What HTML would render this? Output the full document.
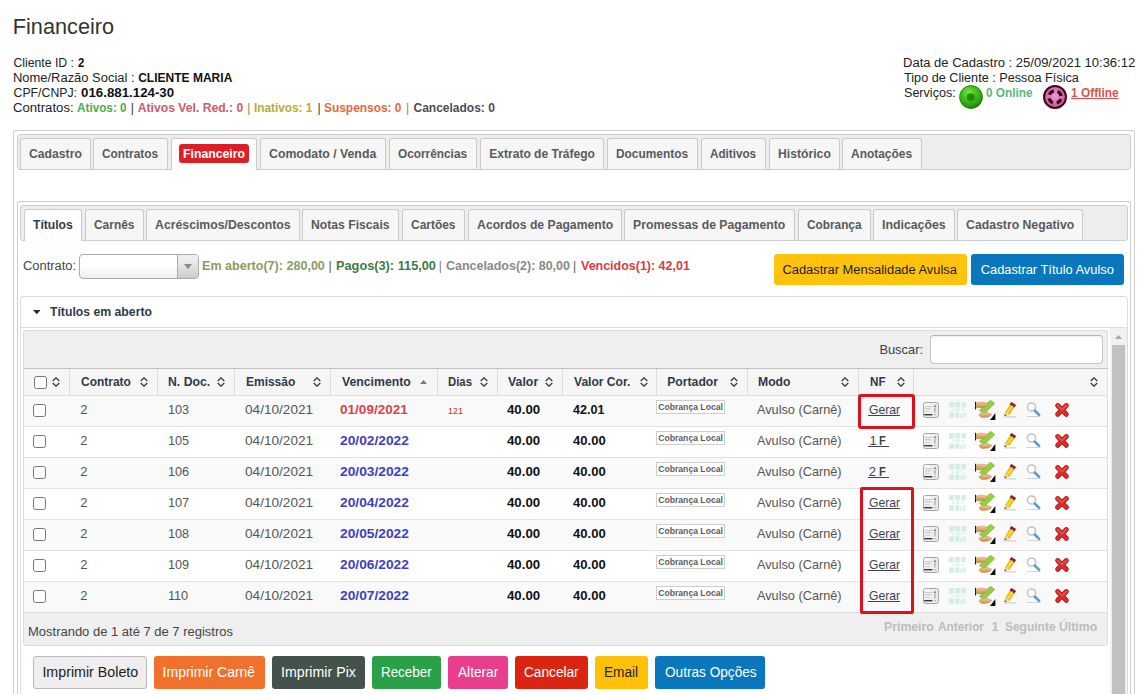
<!DOCTYPE html>
<html lang="pt-br"><head><meta charset="utf-8"><title>Financeiro</title>
<style>
html,body{margin:0;padding:0;background:#fff;}
html{width:1146px;height:694px;overflow:hidden;}
body{width:1146px;height:694px;overflow:hidden;position:relative;font-family:"Liberation Sans",sans-serif;}
body>div,body>svg,body>span{position:absolute;box-sizing:border-box;}
span.t{white-space:pre;display:block;transform-origin:0 0;line-height:20px;}

</style></head>
<body>
<svg style="left:959px;top:85px" width="24" height="24" viewBox="0 0 24 24"><defs>
<radialGradient id="gb" cx="42%" cy="32%" r="68%"><stop offset="0" stop-color="#7ee24e"/><stop offset=".45" stop-color="#45c01e"/><stop offset=".8" stop-color="#2ca010"/><stop offset="1" stop-color="#1a7a08"/></radialGradient>
<radialGradient id="gc" cx="50%" cy="50%" r="50%"><stop offset="0" stop-color="#1b7d0c"/><stop offset=".7" stop-color="#239212"/><stop offset="1" stop-color="#34ad1a"/></radialGradient></defs>
<circle cx="12" cy="12" r="11.7" fill="url(#gb)"/><circle cx="12" cy="12" r="11.3" fill="none" stroke="#1f820c" stroke-width=".9" opacity=".8"/><circle cx="11.9" cy="12.4" r="4.5" fill="url(#gc)"/></svg>
<svg style="left:1043px;top:85px" width="24" height="24" viewBox="0 0 24 24"><defs>
<radialGradient id="pb" cx="50%" cy="45%" r="55%"><stop offset="0" stop-color="#ea9ad6"/><stop offset=".55" stop-color="#e070b0"/><stop offset="1" stop-color="#cf4b86"/></radialGradient></defs>
<circle cx="12" cy="12" r="11" fill="url(#pb)" stroke="#3b0a20" stroke-width="2"/>
<circle cx="12" cy="12" r="6.1" fill="none" stroke="#26081a" stroke-width="3.1" stroke-dasharray="5.6 3.98" stroke-dashoffset="-1.99"/></svg>
<div style="left:13px;top:130px;width:1122px;height:564px;border:1px solid #cdcdcd;border-bottom:0;border-radius:3px 3px 0 0;background:#fff;"></div>
<div style="left:17px;top:134px;width:1114px;height:36px;border:1px solid #cdcdcd;border-radius:3px;background:#ededed;"></div>
<div style="left:20px;top:138px;width:71px;height:31px;border:1px solid #cacaca;border-bottom:0;border-radius:3px 3px 0 0;background:#f6f6f6;"></div>
<div style="left:93px;top:138px;width:75px;height:31px;border:1px solid #cacaca;border-bottom:0;border-radius:3px 3px 0 0;background:#f6f6f6;"></div>
<div style="left:171px;top:138px;width:86px;height:32px;border:1px solid #cacaca;border-bottom:0;border-radius:3px 3px 0 0;background:#fff;"></div>
<div style="left:179px;top:144px;width:70px;height:19px;background:#dc1f26;border-radius:3px;"></div>
<div style="left:260px;top:138px;width:126px;height:31px;border:1px solid #cacaca;border-bottom:0;border-radius:3px 3px 0 0;background:#f6f6f6;"></div>
<div style="left:389px;top:138px;width:88px;height:31px;border:1px solid #cacaca;border-bottom:0;border-radius:3px 3px 0 0;background:#f6f6f6;"></div>
<div style="left:480px;top:138px;width:124px;height:31px;border:1px solid #cacaca;border-bottom:0;border-radius:3px 3px 0 0;background:#f6f6f6;"></div>
<div style="left:607px;top:138px;width:91px;height:31px;border:1px solid #cacaca;border-bottom:0;border-radius:3px 3px 0 0;background:#f6f6f6;"></div>
<div style="left:701px;top:138px;width:65px;height:31px;border:1px solid #cacaca;border-bottom:0;border-radius:3px 3px 0 0;background:#f6f6f6;"></div>
<div style="left:769px;top:138px;width:71px;height:31px;border:1px solid #cacaca;border-bottom:0;border-radius:3px 3px 0 0;background:#f6f6f6;"></div>
<div style="left:842px;top:138px;width:80px;height:31px;border:1px solid #cacaca;border-bottom:0;border-radius:3px 3px 0 0;background:#f6f6f6;"></div>
<div style="left:17px;top:201px;width:1114px;height:493px;border:1px solid #cdcdcd;border-bottom:0;border-radius:3px 3px 0 0;background:#fff;"></div>
<div style="left:20px;top:205px;width:1108px;height:36px;border:1px solid #cdcdcd;border-radius:3px;background:#ededed;"></div>
<div style="left:24px;top:209px;width:58px;height:32px;border:1px solid #cacaca;border-bottom:0;border-radius:3px 3px 0 0;background:#fff;"></div>
<div style="left:85px;top:209px;width:59px;height:31px;border:1px solid #cacaca;border-bottom:0;border-radius:3px 3px 0 0;background:#f6f6f6;"></div>
<div style="left:146px;top:209px;width:154px;height:31px;border:1px solid #cacaca;border-bottom:0;border-radius:3px 3px 0 0;background:#f6f6f6;"></div>
<div style="left:302px;top:209px;width:97px;height:31px;border:1px solid #cacaca;border-bottom:0;border-radius:3px 3px 0 0;background:#f6f6f6;"></div>
<div style="left:402px;top:209px;width:63px;height:31px;border:1px solid #cacaca;border-bottom:0;border-radius:3px 3px 0 0;background:#f6f6f6;"></div>
<div style="left:468px;top:209px;width:154px;height:31px;border:1px solid #cacaca;border-bottom:0;border-radius:3px 3px 0 0;background:#f6f6f6;"></div>
<div style="left:624px;top:209px;width:171px;height:31px;border:1px solid #cacaca;border-bottom:0;border-radius:3px 3px 0 0;background:#f6f6f6;"></div>
<div style="left:798px;top:209px;width:73px;height:31px;border:1px solid #cacaca;border-bottom:0;border-radius:3px 3px 0 0;background:#f6f6f6;"></div>
<div style="left:873px;top:209px;width:82px;height:31px;border:1px solid #cacaca;border-bottom:0;border-radius:3px 3px 0 0;background:#f6f6f6;"></div>
<div style="left:957px;top:209px;width:126px;height:31px;border:1px solid #cacaca;border-bottom:0;border-radius:3px 3px 0 0;background:#f6f6f6;"></div>
<div style="left:79px;top:254px;width:120px;height:25px;border:1px solid #aaa;border-radius:4px;background:linear-gradient(#fff 50%,#eee 100%);"></div>
<div style="left:177px;top:255px;width:21px;height:23px;border-left:1px solid #aaa;border-radius:0 3px 3px 0;background:linear-gradient(#eee 20%,#ccc 100%);"></div>
<svg style="left:184px;top:264px" width="8" height="5" viewBox="0 0 8 5"><path d="M0 0H8L4 5Z" fill="#888"/></svg>
<div style="left:774px;top:254px;width:193px;height:31px;background:#ffc20e;border-radius:3px;"></div>
<div style="left:971px;top:254px;width:153px;height:31px;background:#0a77bd;border-radius:3px;"></div>
<div style="left:20px;top:296px;width:1108px;height:32px;border:1px solid #ddd;border-radius:3px 3px 0 0;background:#fff;"></div>
<svg style="left:32.7px;top:309.8px" width="7.6" height="4.3" viewBox="0 0 7.6 4.3"><path d="M0 0H7.6L3.8 4.3Z" fill="#2e2e2e"/></svg>
<div style="left:20px;top:327px;width:1108px;height:367px;border:1px solid #ddd;border-bottom:0;background:#fff;"></div>
<div style="left:1110px;top:328px;width:17px;height:366px;background:#f1f1f1;"></div>
<svg style="left:1115px;top:335px" width="7" height="4" viewBox="0 0 7 4"><path d="M0 4L3.5 0L7 4Z" fill="#a6a6a6"/></svg>
<div style="left:1112px;top:345px;width:13px;height:349px;background:#c1c1c1;"></div>
<div style="left:23px;top:330px;width:1085px;height:39px;border:1px solid #ddd;border-bottom:0;border-radius:3px 3px 0 0;background:#efefef;"></div>
<div style="left:930px;top:335px;width:173px;height:29px;border:1px solid #c6c6c6;border-top-color:#b4b4b4;border-radius:4px;background:#fff;box-shadow:inset 0 1px 1px rgba(0,0,0,.06);"></div>
<div style="left:23px;top:368px;width:1085px;height:28px;border:1px solid #ddd;border-top:1px solid #c2c2c2;background:#f6f6f6;"></div>
<div style="left:69px;top:369px;width:1px;height:26px;background:#ddd;"></div>
<div style="left:157px;top:369px;width:1px;height:26px;background:#ddd;"></div>
<div style="left:234px;top:369px;width:1px;height:26px;background:#ddd;"></div>
<div style="left:330px;top:369px;width:1px;height:26px;background:#ddd;"></div>
<div style="left:437px;top:369px;width:1px;height:26px;background:#ddd;"></div>
<div style="left:497px;top:369px;width:1px;height:26px;background:#ddd;"></div>
<div style="left:562px;top:369px;width:1px;height:26px;background:#ddd;"></div>
<div style="left:656px;top:369px;width:1px;height:26px;background:#ddd;"></div>
<div style="left:747px;top:369px;width:1px;height:26px;background:#ddd;"></div>
<div style="left:858px;top:369px;width:1px;height:26px;background:#ddd;"></div>
<div style="left:913px;top:369px;width:1px;height:26px;background:#ddd;"></div>
<div style="left:34px;top:376px;width:13px;height:13px;border:1px solid #767676;border-radius:2.5px;background:#fff;"></div>
<svg style="left:52.4px;top:377px" width="8" height="10" viewBox="0 0 8 10"><path d="M.7 4L4 .9L7.3 4M.7 6L4 9.1L7.3 6" fill="none" stroke="#2e2e2e" stroke-width="1.2"/></svg>
<svg style="left:140.2px;top:377px" width="8" height="10" viewBox="0 0 8 10"><path d="M.7 4L4 .9L7.3 4M.7 6L4 9.1L7.3 6" fill="none" stroke="#2e2e2e" stroke-width="1.2"/></svg>
<svg style="left:217.4px;top:377px" width="8" height="10" viewBox="0 0 8 10"><path d="M.7 4L4 .9L7.3 4M.7 6L4 9.1L7.3 6" fill="none" stroke="#2e2e2e" stroke-width="1.2"/></svg>
<svg style="left:313.1px;top:377px" width="8" height="10" viewBox="0 0 8 10"><path d="M.7 4L4 .9L7.3 4M.7 6L4 9.1L7.3 6" fill="none" stroke="#2e2e2e" stroke-width="1.2"/></svg>
<svg style="left:420px;top:380.3px" width="7" height="4" viewBox="0 0 7 4"><path d="M0 4L3.5 0L7 4Z" fill="#7a7a7a"/></svg>
<svg style="left:480.2px;top:377px" width="8" height="10" viewBox="0 0 8 10"><path d="M.7 4L4 .9L7.3 4M.7 6L4 9.1L7.3 6" fill="none" stroke="#2e2e2e" stroke-width="1.2"/></svg>
<svg style="left:545.3px;top:377px" width="8" height="10" viewBox="0 0 8 10"><path d="M.7 4L4 .9L7.3 4M.7 6L4 9.1L7.3 6" fill="none" stroke="#2e2e2e" stroke-width="1.2"/></svg>
<svg style="left:639.5px;top:377px" width="8" height="10" viewBox="0 0 8 10"><path d="M.7 4L4 .9L7.3 4M.7 6L4 9.1L7.3 6" fill="none" stroke="#2e2e2e" stroke-width="1.2"/></svg>
<svg style="left:730.1px;top:377px" width="8" height="10" viewBox="0 0 8 10"><path d="M.7 4L4 .9L7.3 4M.7 6L4 9.1L7.3 6" fill="none" stroke="#2e2e2e" stroke-width="1.2"/></svg>
<svg style="left:840.8px;top:377px" width="8" height="10" viewBox="0 0 8 10"><path d="M.7 4L4 .9L7.3 4M.7 6L4 9.1L7.3 6" fill="none" stroke="#2e2e2e" stroke-width="1.2"/></svg>
<svg style="left:896.6px;top:377px" width="8" height="10" viewBox="0 0 8 10"><path d="M.7 4L4 .9L7.3 4M.7 6L4 9.1L7.3 6" fill="none" stroke="#2e2e2e" stroke-width="1.2"/></svg>
<svg style="left:1090.4px;top:377px" width="8" height="10" viewBox="0 0 8 10"><path d="M.7 4L4 .9L7.3 4M.7 6L4 9.1L7.3 6" fill="none" stroke="#2e2e2e" stroke-width="1.2"/></svg>
<div style="left:23px;top:396px;width:1085px;height:31px;background:#f9f9f9;border-left:1px solid #ddd;border-right:1px solid #ddd;border-bottom:1px solid #e2e2e2;"></div>
<div style="left:33px;top:404px;width:13px;height:13px;border:1px solid #767676;border-radius:2.5px;background:#fff;"></div>
<div style="left:656px;top:400px;width:69px;height:14px;border:1px solid #cdcdcd;background:#fff;"></div>
<div style="left:868px;top:415px;width:32px;height:1px;background:#3d4450;"></div>
<svg style="left:923px;top:400px" width="148" height="21" viewBox="0 0 148 21"><g transform="translate(0,2)"><rect x=".5" y=".5" width="15" height="15" rx="2" fill="#efefef" stroke="#a3a3a3"/><rect x="1.5" y="1.5" width="4.6" height="2" fill="#fff"/><rect x="2" y="4" width="8" height=".8" fill="#c4c4c4"/><rect x="2" y="6.4" width="6" height=".8" fill="#b8b8b8"/><rect x="2" y="9" width="5" height=".8" fill="#cacaca"/><rect x="10.8" y="2.6" width="2.4" height="8.6" fill="#d6d6d6"/><rect x="11.2" y="3.6" width="2" height="1.2" fill="#6e6e6e"/><rect x="11.2" y="6" width="1.2" height="3.6" fill="#b0b0b0"/><rect x="1.2" y="12" width="8.2" height="1.4" fill="#383838"/><rect x="10.8" y="12" width="2.6" height="1.4" fill="#c0c0c0"/></g>
<g transform="translate(26,2)" fill="#c9ede7" opacity=".85"><rect x="0" y="0" width="5" height="5.4"/><rect x="6.2" y="0" width="5" height="5.4"/><rect x="12.4" y="0" width="4.4" height="5.4"/><rect x="2.6" y="6.6" width="3" height="2.4" fill="#dbf3ef"/><rect x="7" y="6.4" width="3.4" height="3" fill="#d6f1ed"/><rect x="12" y="6.8" width="3" height="2.2" fill="#e0f5f1"/><rect x="0" y="10.4" width="5" height="5.4"/><rect x="6.2" y="10.4" width="4" height="5.4"/><rect x="11" y="11.6" width="2.4" height="4.2" fill="#d3f0eb"/><rect x="14" y="10.4" width="2.6" height="5.4" fill="#d3f0eb"/></g>
<g transform="translate(52,0)"><rect x="0" y="1.8" width="1.1" height="7.6" fill="#151515"/><path d="M15.6 .2 L19.7 3.6 L13.4 9.4 L9.2 14 L4.4 10.4 L9.4 5.6Z" fill="#8fd23e" stroke="#68ad2a" stroke-width=".6"/><path d="M1.3 3.2 C3.4 1.8 8.6 1.8 12.2 3.2 C13.2 4.2 12.4 5.6 10.8 6.4 C8 7.8 4 8 1.3 7.6Z" fill="url(#hg)" stroke="#b98446" stroke-width=".5"/><path d="M4 14.6 C5.6 12.6 10.6 12.2 13.6 12.8 L16.8 14.4 C15.4 16.6 11.6 17.8 7.4 17.4 C5.6 17.2 4.2 16.2 4 14.6Z" fill="url(#hg)" stroke="#b98446" stroke-width=".5"/><path d="M20.4 13 L20.4 20 L15 20Z" fill="#0d0d0d"/></g>
<g transform="translate(81,1.7)"><rect x="0" y="14.7" width="12.2" height="1" fill="#c6c6c6"/><path d="M7.3 .2 L12 3.4 L5.6 13.3 L.6 11.3Z" fill="#efc11f"/><path d="M7.3 .2 L12 3.4 L10.4 5.9 L5.7 2.7Z" fill="#8c1c2c"/><path d="M.6 11.3 L5.6 13.3 L.9 14Z" fill="#e9cf9a"/><path d="M.5 12.5 L2.6 13.7 L.8 14.2Z" fill="#1a1a1a"/><path d="M8.6 3.9 L3 11.6" stroke="#f8de6e" stroke-width="1.2" fill="none"/></g>
<g transform="translate(103.8,2)"><rect x="0" y="14" width="13.6" height=".9" fill="#cfcfcf"/><circle cx="4.7" cy="5" r="4.1" fill="#fbfdfe" stroke="#c6bfc3" stroke-width="1.5"/><path d="M8.1 8.7 L12.3 12.9" stroke="#5b9fc9" stroke-width="2.7" stroke-linecap="round"/></g>
<g transform="translate(132,2.8)" fill="none" stroke-linecap="round"><path d="M2.7 2.8 L11.3 11.5 M11.3 2.8 L2.7 11.5" stroke="#a91717" stroke-width="5"/><path d="M2.7 2.8 L11.3 11.5 M11.3 2.8 L2.7 11.5" stroke="#d62c2c" stroke-width="3.7"/><path d="M2.7 2.5 L7 6.9 L11.3 2.5" stroke="#ea5a58" stroke-width="1.8" opacity=".7"/></g></svg>
<div style="left:23px;top:427px;width:1085px;height:31px;background:#fff;border-left:1px solid #ddd;border-right:1px solid #ddd;border-bottom:1px solid #e2e2e2;"></div>
<div style="left:33px;top:435px;width:13px;height:13px;border:1px solid #767676;border-radius:2.5px;background:#fff;"></div>
<div style="left:656px;top:431px;width:69px;height:14px;border:1px solid #cdcdcd;background:#fff;"></div>
<div style="left:868px;top:446px;width:21.4px;height:1px;background:#3d4450;"></div>
<svg style="left:923px;top:431px" width="148" height="21" viewBox="0 0 148 21"><g transform="translate(0,2)"><rect x=".5" y=".5" width="15" height="15" rx="2" fill="#efefef" stroke="#a3a3a3"/><rect x="1.5" y="1.5" width="4.6" height="2" fill="#fff"/><rect x="2" y="4" width="8" height=".8" fill="#c4c4c4"/><rect x="2" y="6.4" width="6" height=".8" fill="#b8b8b8"/><rect x="2" y="9" width="5" height=".8" fill="#cacaca"/><rect x="10.8" y="2.6" width="2.4" height="8.6" fill="#d6d6d6"/><rect x="11.2" y="3.6" width="2" height="1.2" fill="#6e6e6e"/><rect x="11.2" y="6" width="1.2" height="3.6" fill="#b0b0b0"/><rect x="1.2" y="12" width="8.2" height="1.4" fill="#383838"/><rect x="10.8" y="12" width="2.6" height="1.4" fill="#c0c0c0"/></g>
<g transform="translate(26,2)" fill="#c9ede7" opacity=".85"><rect x="0" y="0" width="5" height="5.4"/><rect x="6.2" y="0" width="5" height="5.4"/><rect x="12.4" y="0" width="4.4" height="5.4"/><rect x="2.6" y="6.6" width="3" height="2.4" fill="#dbf3ef"/><rect x="7" y="6.4" width="3.4" height="3" fill="#d6f1ed"/><rect x="12" y="6.8" width="3" height="2.2" fill="#e0f5f1"/><rect x="0" y="10.4" width="5" height="5.4"/><rect x="6.2" y="10.4" width="4" height="5.4"/><rect x="11" y="11.6" width="2.4" height="4.2" fill="#d3f0eb"/><rect x="14" y="10.4" width="2.6" height="5.4" fill="#d3f0eb"/></g>
<g transform="translate(52,0)"><rect x="0" y="1.8" width="1.1" height="7.6" fill="#151515"/><path d="M15.6 .2 L19.7 3.6 L13.4 9.4 L9.2 14 L4.4 10.4 L9.4 5.6Z" fill="#8fd23e" stroke="#68ad2a" stroke-width=".6"/><path d="M1.3 3.2 C3.4 1.8 8.6 1.8 12.2 3.2 C13.2 4.2 12.4 5.6 10.8 6.4 C8 7.8 4 8 1.3 7.6Z" fill="url(#hg)" stroke="#b98446" stroke-width=".5"/><path d="M4 14.6 C5.6 12.6 10.6 12.2 13.6 12.8 L16.8 14.4 C15.4 16.6 11.6 17.8 7.4 17.4 C5.6 17.2 4.2 16.2 4 14.6Z" fill="url(#hg)" stroke="#b98446" stroke-width=".5"/><path d="M20.4 13 L20.4 20 L15 20Z" fill="#0d0d0d"/></g>
<g transform="translate(81,1.7)"><rect x="0" y="14.7" width="12.2" height="1" fill="#c6c6c6"/><path d="M7.3 .2 L12 3.4 L5.6 13.3 L.6 11.3Z" fill="#efc11f"/><path d="M7.3 .2 L12 3.4 L10.4 5.9 L5.7 2.7Z" fill="#8c1c2c"/><path d="M.6 11.3 L5.6 13.3 L.9 14Z" fill="#e9cf9a"/><path d="M.5 12.5 L2.6 13.7 L.8 14.2Z" fill="#1a1a1a"/><path d="M8.6 3.9 L3 11.6" stroke="#f8de6e" stroke-width="1.2" fill="none"/></g>
<g transform="translate(103.8,2)"><rect x="0" y="14" width="13.6" height=".9" fill="#cfcfcf"/><circle cx="4.7" cy="5" r="4.1" fill="#fbfdfe" stroke="#c6bfc3" stroke-width="1.5"/><path d="M8.1 8.7 L12.3 12.9" stroke="#5b9fc9" stroke-width="2.7" stroke-linecap="round"/></g>
<g transform="translate(132,2.8)" fill="none" stroke-linecap="round"><path d="M2.7 2.8 L11.3 11.5 M11.3 2.8 L2.7 11.5" stroke="#a91717" stroke-width="5"/><path d="M2.7 2.8 L11.3 11.5 M11.3 2.8 L2.7 11.5" stroke="#d62c2c" stroke-width="3.7"/><path d="M2.7 2.5 L7 6.9 L11.3 2.5" stroke="#ea5a58" stroke-width="1.8" opacity=".7"/></g></svg>
<div style="left:23px;top:458px;width:1085px;height:31px;background:#f9f9f9;border-left:1px solid #ddd;border-right:1px solid #ddd;border-bottom:1px solid #e2e2e2;"></div>
<div style="left:33px;top:466px;width:13px;height:13px;border:1px solid #767676;border-radius:2.5px;background:#fff;"></div>
<div style="left:656px;top:462px;width:69px;height:14px;border:1px solid #cdcdcd;background:#fff;"></div>
<div style="left:868px;top:477px;width:21.4px;height:1px;background:#3d4450;"></div>
<svg style="left:923px;top:462px" width="148" height="21" viewBox="0 0 148 21"><g transform="translate(0,2)"><rect x=".5" y=".5" width="15" height="15" rx="2" fill="#efefef" stroke="#a3a3a3"/><rect x="1.5" y="1.5" width="4.6" height="2" fill="#fff"/><rect x="2" y="4" width="8" height=".8" fill="#c4c4c4"/><rect x="2" y="6.4" width="6" height=".8" fill="#b8b8b8"/><rect x="2" y="9" width="5" height=".8" fill="#cacaca"/><rect x="10.8" y="2.6" width="2.4" height="8.6" fill="#d6d6d6"/><rect x="11.2" y="3.6" width="2" height="1.2" fill="#6e6e6e"/><rect x="11.2" y="6" width="1.2" height="3.6" fill="#b0b0b0"/><rect x="1.2" y="12" width="8.2" height="1.4" fill="#383838"/><rect x="10.8" y="12" width="2.6" height="1.4" fill="#c0c0c0"/></g>
<g transform="translate(26,2)" fill="#c9ede7" opacity=".85"><rect x="0" y="0" width="5" height="5.4"/><rect x="6.2" y="0" width="5" height="5.4"/><rect x="12.4" y="0" width="4.4" height="5.4"/><rect x="2.6" y="6.6" width="3" height="2.4" fill="#dbf3ef"/><rect x="7" y="6.4" width="3.4" height="3" fill="#d6f1ed"/><rect x="12" y="6.8" width="3" height="2.2" fill="#e0f5f1"/><rect x="0" y="10.4" width="5" height="5.4"/><rect x="6.2" y="10.4" width="4" height="5.4"/><rect x="11" y="11.6" width="2.4" height="4.2" fill="#d3f0eb"/><rect x="14" y="10.4" width="2.6" height="5.4" fill="#d3f0eb"/></g>
<g transform="translate(52,0)"><rect x="0" y="1.8" width="1.1" height="7.6" fill="#151515"/><path d="M15.6 .2 L19.7 3.6 L13.4 9.4 L9.2 14 L4.4 10.4 L9.4 5.6Z" fill="#8fd23e" stroke="#68ad2a" stroke-width=".6"/><path d="M1.3 3.2 C3.4 1.8 8.6 1.8 12.2 3.2 C13.2 4.2 12.4 5.6 10.8 6.4 C8 7.8 4 8 1.3 7.6Z" fill="url(#hg)" stroke="#b98446" stroke-width=".5"/><path d="M4 14.6 C5.6 12.6 10.6 12.2 13.6 12.8 L16.8 14.4 C15.4 16.6 11.6 17.8 7.4 17.4 C5.6 17.2 4.2 16.2 4 14.6Z" fill="url(#hg)" stroke="#b98446" stroke-width=".5"/><path d="M20.4 13 L20.4 20 L15 20Z" fill="#0d0d0d"/></g>
<g transform="translate(81,1.7)"><rect x="0" y="14.7" width="12.2" height="1" fill="#c6c6c6"/><path d="M7.3 .2 L12 3.4 L5.6 13.3 L.6 11.3Z" fill="#efc11f"/><path d="M7.3 .2 L12 3.4 L10.4 5.9 L5.7 2.7Z" fill="#8c1c2c"/><path d="M.6 11.3 L5.6 13.3 L.9 14Z" fill="#e9cf9a"/><path d="M.5 12.5 L2.6 13.7 L.8 14.2Z" fill="#1a1a1a"/><path d="M8.6 3.9 L3 11.6" stroke="#f8de6e" stroke-width="1.2" fill="none"/></g>
<g transform="translate(103.8,2)"><rect x="0" y="14" width="13.6" height=".9" fill="#cfcfcf"/><circle cx="4.7" cy="5" r="4.1" fill="#fbfdfe" stroke="#c6bfc3" stroke-width="1.5"/><path d="M8.1 8.7 L12.3 12.9" stroke="#5b9fc9" stroke-width="2.7" stroke-linecap="round"/></g>
<g transform="translate(132,2.8)" fill="none" stroke-linecap="round"><path d="M2.7 2.8 L11.3 11.5 M11.3 2.8 L2.7 11.5" stroke="#a91717" stroke-width="5"/><path d="M2.7 2.8 L11.3 11.5 M11.3 2.8 L2.7 11.5" stroke="#d62c2c" stroke-width="3.7"/><path d="M2.7 2.5 L7 6.9 L11.3 2.5" stroke="#ea5a58" stroke-width="1.8" opacity=".7"/></g></svg>
<div style="left:23px;top:489px;width:1085px;height:31px;background:#fff;border-left:1px solid #ddd;border-right:1px solid #ddd;border-bottom:1px solid #e2e2e2;"></div>
<div style="left:33px;top:497px;width:13px;height:13px;border:1px solid #767676;border-radius:2.5px;background:#fff;"></div>
<div style="left:656px;top:493px;width:69px;height:14px;border:1px solid #cdcdcd;background:#fff;"></div>
<div style="left:868px;top:508px;width:32px;height:1px;background:#3d4450;"></div>
<svg style="left:923px;top:493px" width="148" height="21" viewBox="0 0 148 21"><g transform="translate(0,2)"><rect x=".5" y=".5" width="15" height="15" rx="2" fill="#efefef" stroke="#a3a3a3"/><rect x="1.5" y="1.5" width="4.6" height="2" fill="#fff"/><rect x="2" y="4" width="8" height=".8" fill="#c4c4c4"/><rect x="2" y="6.4" width="6" height=".8" fill="#b8b8b8"/><rect x="2" y="9" width="5" height=".8" fill="#cacaca"/><rect x="10.8" y="2.6" width="2.4" height="8.6" fill="#d6d6d6"/><rect x="11.2" y="3.6" width="2" height="1.2" fill="#6e6e6e"/><rect x="11.2" y="6" width="1.2" height="3.6" fill="#b0b0b0"/><rect x="1.2" y="12" width="8.2" height="1.4" fill="#383838"/><rect x="10.8" y="12" width="2.6" height="1.4" fill="#c0c0c0"/></g>
<g transform="translate(26,2)" fill="#c9ede7" opacity=".85"><rect x="0" y="0" width="5" height="5.4"/><rect x="6.2" y="0" width="5" height="5.4"/><rect x="12.4" y="0" width="4.4" height="5.4"/><rect x="2.6" y="6.6" width="3" height="2.4" fill="#dbf3ef"/><rect x="7" y="6.4" width="3.4" height="3" fill="#d6f1ed"/><rect x="12" y="6.8" width="3" height="2.2" fill="#e0f5f1"/><rect x="0" y="10.4" width="5" height="5.4"/><rect x="6.2" y="10.4" width="4" height="5.4"/><rect x="11" y="11.6" width="2.4" height="4.2" fill="#d3f0eb"/><rect x="14" y="10.4" width="2.6" height="5.4" fill="#d3f0eb"/></g>
<g transform="translate(52,0)"><rect x="0" y="1.8" width="1.1" height="7.6" fill="#151515"/><path d="M15.6 .2 L19.7 3.6 L13.4 9.4 L9.2 14 L4.4 10.4 L9.4 5.6Z" fill="#8fd23e" stroke="#68ad2a" stroke-width=".6"/><path d="M1.3 3.2 C3.4 1.8 8.6 1.8 12.2 3.2 C13.2 4.2 12.4 5.6 10.8 6.4 C8 7.8 4 8 1.3 7.6Z" fill="url(#hg)" stroke="#b98446" stroke-width=".5"/><path d="M4 14.6 C5.6 12.6 10.6 12.2 13.6 12.8 L16.8 14.4 C15.4 16.6 11.6 17.8 7.4 17.4 C5.6 17.2 4.2 16.2 4 14.6Z" fill="url(#hg)" stroke="#b98446" stroke-width=".5"/><path d="M20.4 13 L20.4 20 L15 20Z" fill="#0d0d0d"/></g>
<g transform="translate(81,1.7)"><rect x="0" y="14.7" width="12.2" height="1" fill="#c6c6c6"/><path d="M7.3 .2 L12 3.4 L5.6 13.3 L.6 11.3Z" fill="#efc11f"/><path d="M7.3 .2 L12 3.4 L10.4 5.9 L5.7 2.7Z" fill="#8c1c2c"/><path d="M.6 11.3 L5.6 13.3 L.9 14Z" fill="#e9cf9a"/><path d="M.5 12.5 L2.6 13.7 L.8 14.2Z" fill="#1a1a1a"/><path d="M8.6 3.9 L3 11.6" stroke="#f8de6e" stroke-width="1.2" fill="none"/></g>
<g transform="translate(103.8,2)"><rect x="0" y="14" width="13.6" height=".9" fill="#cfcfcf"/><circle cx="4.7" cy="5" r="4.1" fill="#fbfdfe" stroke="#c6bfc3" stroke-width="1.5"/><path d="M8.1 8.7 L12.3 12.9" stroke="#5b9fc9" stroke-width="2.7" stroke-linecap="round"/></g>
<g transform="translate(132,2.8)" fill="none" stroke-linecap="round"><path d="M2.7 2.8 L11.3 11.5 M11.3 2.8 L2.7 11.5" stroke="#a91717" stroke-width="5"/><path d="M2.7 2.8 L11.3 11.5 M11.3 2.8 L2.7 11.5" stroke="#d62c2c" stroke-width="3.7"/><path d="M2.7 2.5 L7 6.9 L11.3 2.5" stroke="#ea5a58" stroke-width="1.8" opacity=".7"/></g></svg>
<div style="left:23px;top:520px;width:1085px;height:31px;background:#f9f9f9;border-left:1px solid #ddd;border-right:1px solid #ddd;border-bottom:1px solid #e2e2e2;"></div>
<div style="left:33px;top:528px;width:13px;height:13px;border:1px solid #767676;border-radius:2.5px;background:#fff;"></div>
<div style="left:656px;top:524px;width:69px;height:14px;border:1px solid #cdcdcd;background:#fff;"></div>
<div style="left:868px;top:539px;width:32px;height:1px;background:#3d4450;"></div>
<svg style="left:923px;top:524px" width="148" height="21" viewBox="0 0 148 21"><g transform="translate(0,2)"><rect x=".5" y=".5" width="15" height="15" rx="2" fill="#efefef" stroke="#a3a3a3"/><rect x="1.5" y="1.5" width="4.6" height="2" fill="#fff"/><rect x="2" y="4" width="8" height=".8" fill="#c4c4c4"/><rect x="2" y="6.4" width="6" height=".8" fill="#b8b8b8"/><rect x="2" y="9" width="5" height=".8" fill="#cacaca"/><rect x="10.8" y="2.6" width="2.4" height="8.6" fill="#d6d6d6"/><rect x="11.2" y="3.6" width="2" height="1.2" fill="#6e6e6e"/><rect x="11.2" y="6" width="1.2" height="3.6" fill="#b0b0b0"/><rect x="1.2" y="12" width="8.2" height="1.4" fill="#383838"/><rect x="10.8" y="12" width="2.6" height="1.4" fill="#c0c0c0"/></g>
<g transform="translate(26,2)" fill="#c9ede7" opacity=".85"><rect x="0" y="0" width="5" height="5.4"/><rect x="6.2" y="0" width="5" height="5.4"/><rect x="12.4" y="0" width="4.4" height="5.4"/><rect x="2.6" y="6.6" width="3" height="2.4" fill="#dbf3ef"/><rect x="7" y="6.4" width="3.4" height="3" fill="#d6f1ed"/><rect x="12" y="6.8" width="3" height="2.2" fill="#e0f5f1"/><rect x="0" y="10.4" width="5" height="5.4"/><rect x="6.2" y="10.4" width="4" height="5.4"/><rect x="11" y="11.6" width="2.4" height="4.2" fill="#d3f0eb"/><rect x="14" y="10.4" width="2.6" height="5.4" fill="#d3f0eb"/></g>
<g transform="translate(52,0)"><rect x="0" y="1.8" width="1.1" height="7.6" fill="#151515"/><path d="M15.6 .2 L19.7 3.6 L13.4 9.4 L9.2 14 L4.4 10.4 L9.4 5.6Z" fill="#8fd23e" stroke="#68ad2a" stroke-width=".6"/><path d="M1.3 3.2 C3.4 1.8 8.6 1.8 12.2 3.2 C13.2 4.2 12.4 5.6 10.8 6.4 C8 7.8 4 8 1.3 7.6Z" fill="url(#hg)" stroke="#b98446" stroke-width=".5"/><path d="M4 14.6 C5.6 12.6 10.6 12.2 13.6 12.8 L16.8 14.4 C15.4 16.6 11.6 17.8 7.4 17.4 C5.6 17.2 4.2 16.2 4 14.6Z" fill="url(#hg)" stroke="#b98446" stroke-width=".5"/><path d="M20.4 13 L20.4 20 L15 20Z" fill="#0d0d0d"/></g>
<g transform="translate(81,1.7)"><rect x="0" y="14.7" width="12.2" height="1" fill="#c6c6c6"/><path d="M7.3 .2 L12 3.4 L5.6 13.3 L.6 11.3Z" fill="#efc11f"/><path d="M7.3 .2 L12 3.4 L10.4 5.9 L5.7 2.7Z" fill="#8c1c2c"/><path d="M.6 11.3 L5.6 13.3 L.9 14Z" fill="#e9cf9a"/><path d="M.5 12.5 L2.6 13.7 L.8 14.2Z" fill="#1a1a1a"/><path d="M8.6 3.9 L3 11.6" stroke="#f8de6e" stroke-width="1.2" fill="none"/></g>
<g transform="translate(103.8,2)"><rect x="0" y="14" width="13.6" height=".9" fill="#cfcfcf"/><circle cx="4.7" cy="5" r="4.1" fill="#fbfdfe" stroke="#c6bfc3" stroke-width="1.5"/><path d="M8.1 8.7 L12.3 12.9" stroke="#5b9fc9" stroke-width="2.7" stroke-linecap="round"/></g>
<g transform="translate(132,2.8)" fill="none" stroke-linecap="round"><path d="M2.7 2.8 L11.3 11.5 M11.3 2.8 L2.7 11.5" stroke="#a91717" stroke-width="5"/><path d="M2.7 2.8 L11.3 11.5 M11.3 2.8 L2.7 11.5" stroke="#d62c2c" stroke-width="3.7"/><path d="M2.7 2.5 L7 6.9 L11.3 2.5" stroke="#ea5a58" stroke-width="1.8" opacity=".7"/></g></svg>
<div style="left:23px;top:551px;width:1085px;height:31px;background:#fff;border-left:1px solid #ddd;border-right:1px solid #ddd;border-bottom:1px solid #e2e2e2;"></div>
<div style="left:33px;top:559px;width:13px;height:13px;border:1px solid #767676;border-radius:2.5px;background:#fff;"></div>
<div style="left:656px;top:555px;width:69px;height:14px;border:1px solid #cdcdcd;background:#fff;"></div>
<div style="left:868px;top:570px;width:32px;height:1px;background:#3d4450;"></div>
<svg style="left:923px;top:555px" width="148" height="21" viewBox="0 0 148 21"><g transform="translate(0,2)"><rect x=".5" y=".5" width="15" height="15" rx="2" fill="#efefef" stroke="#a3a3a3"/><rect x="1.5" y="1.5" width="4.6" height="2" fill="#fff"/><rect x="2" y="4" width="8" height=".8" fill="#c4c4c4"/><rect x="2" y="6.4" width="6" height=".8" fill="#b8b8b8"/><rect x="2" y="9" width="5" height=".8" fill="#cacaca"/><rect x="10.8" y="2.6" width="2.4" height="8.6" fill="#d6d6d6"/><rect x="11.2" y="3.6" width="2" height="1.2" fill="#6e6e6e"/><rect x="11.2" y="6" width="1.2" height="3.6" fill="#b0b0b0"/><rect x="1.2" y="12" width="8.2" height="1.4" fill="#383838"/><rect x="10.8" y="12" width="2.6" height="1.4" fill="#c0c0c0"/></g>
<g transform="translate(26,2)" fill="#c9ede7" opacity=".85"><rect x="0" y="0" width="5" height="5.4"/><rect x="6.2" y="0" width="5" height="5.4"/><rect x="12.4" y="0" width="4.4" height="5.4"/><rect x="2.6" y="6.6" width="3" height="2.4" fill="#dbf3ef"/><rect x="7" y="6.4" width="3.4" height="3" fill="#d6f1ed"/><rect x="12" y="6.8" width="3" height="2.2" fill="#e0f5f1"/><rect x="0" y="10.4" width="5" height="5.4"/><rect x="6.2" y="10.4" width="4" height="5.4"/><rect x="11" y="11.6" width="2.4" height="4.2" fill="#d3f0eb"/><rect x="14" y="10.4" width="2.6" height="5.4" fill="#d3f0eb"/></g>
<g transform="translate(52,0)"><rect x="0" y="1.8" width="1.1" height="7.6" fill="#151515"/><path d="M15.6 .2 L19.7 3.6 L13.4 9.4 L9.2 14 L4.4 10.4 L9.4 5.6Z" fill="#8fd23e" stroke="#68ad2a" stroke-width=".6"/><path d="M1.3 3.2 C3.4 1.8 8.6 1.8 12.2 3.2 C13.2 4.2 12.4 5.6 10.8 6.4 C8 7.8 4 8 1.3 7.6Z" fill="url(#hg)" stroke="#b98446" stroke-width=".5"/><path d="M4 14.6 C5.6 12.6 10.6 12.2 13.6 12.8 L16.8 14.4 C15.4 16.6 11.6 17.8 7.4 17.4 C5.6 17.2 4.2 16.2 4 14.6Z" fill="url(#hg)" stroke="#b98446" stroke-width=".5"/><path d="M20.4 13 L20.4 20 L15 20Z" fill="#0d0d0d"/></g>
<g transform="translate(81,1.7)"><rect x="0" y="14.7" width="12.2" height="1" fill="#c6c6c6"/><path d="M7.3 .2 L12 3.4 L5.6 13.3 L.6 11.3Z" fill="#efc11f"/><path d="M7.3 .2 L12 3.4 L10.4 5.9 L5.7 2.7Z" fill="#8c1c2c"/><path d="M.6 11.3 L5.6 13.3 L.9 14Z" fill="#e9cf9a"/><path d="M.5 12.5 L2.6 13.7 L.8 14.2Z" fill="#1a1a1a"/><path d="M8.6 3.9 L3 11.6" stroke="#f8de6e" stroke-width="1.2" fill="none"/></g>
<g transform="translate(103.8,2)"><rect x="0" y="14" width="13.6" height=".9" fill="#cfcfcf"/><circle cx="4.7" cy="5" r="4.1" fill="#fbfdfe" stroke="#c6bfc3" stroke-width="1.5"/><path d="M8.1 8.7 L12.3 12.9" stroke="#5b9fc9" stroke-width="2.7" stroke-linecap="round"/></g>
<g transform="translate(132,2.8)" fill="none" stroke-linecap="round"><path d="M2.7 2.8 L11.3 11.5 M11.3 2.8 L2.7 11.5" stroke="#a91717" stroke-width="5"/><path d="M2.7 2.8 L11.3 11.5 M11.3 2.8 L2.7 11.5" stroke="#d62c2c" stroke-width="3.7"/><path d="M2.7 2.5 L7 6.9 L11.3 2.5" stroke="#ea5a58" stroke-width="1.8" opacity=".7"/></g></svg>
<div style="left:23px;top:582px;width:1085px;height:31px;background:#f9f9f9;border-left:1px solid #ddd;border-right:1px solid #ddd;border-bottom:1px solid #e2e2e2;"></div>
<div style="left:33px;top:590px;width:13px;height:13px;border:1px solid #767676;border-radius:2.5px;background:#fff;"></div>
<div style="left:656px;top:586px;width:69px;height:14px;border:1px solid #cdcdcd;background:#fff;"></div>
<div style="left:868px;top:601px;width:32px;height:1px;background:#3d4450;"></div>
<svg style="left:923px;top:586px" width="148" height="21" viewBox="0 0 148 21"><g transform="translate(0,2)"><rect x=".5" y=".5" width="15" height="15" rx="2" fill="#efefef" stroke="#a3a3a3"/><rect x="1.5" y="1.5" width="4.6" height="2" fill="#fff"/><rect x="2" y="4" width="8" height=".8" fill="#c4c4c4"/><rect x="2" y="6.4" width="6" height=".8" fill="#b8b8b8"/><rect x="2" y="9" width="5" height=".8" fill="#cacaca"/><rect x="10.8" y="2.6" width="2.4" height="8.6" fill="#d6d6d6"/><rect x="11.2" y="3.6" width="2" height="1.2" fill="#6e6e6e"/><rect x="11.2" y="6" width="1.2" height="3.6" fill="#b0b0b0"/><rect x="1.2" y="12" width="8.2" height="1.4" fill="#383838"/><rect x="10.8" y="12" width="2.6" height="1.4" fill="#c0c0c0"/></g>
<g transform="translate(26,2)" fill="#c9ede7" opacity=".85"><rect x="0" y="0" width="5" height="5.4"/><rect x="6.2" y="0" width="5" height="5.4"/><rect x="12.4" y="0" width="4.4" height="5.4"/><rect x="2.6" y="6.6" width="3" height="2.4" fill="#dbf3ef"/><rect x="7" y="6.4" width="3.4" height="3" fill="#d6f1ed"/><rect x="12" y="6.8" width="3" height="2.2" fill="#e0f5f1"/><rect x="0" y="10.4" width="5" height="5.4"/><rect x="6.2" y="10.4" width="4" height="5.4"/><rect x="11" y="11.6" width="2.4" height="4.2" fill="#d3f0eb"/><rect x="14" y="10.4" width="2.6" height="5.4" fill="#d3f0eb"/></g>
<g transform="translate(52,0)"><rect x="0" y="1.8" width="1.1" height="7.6" fill="#151515"/><path d="M15.6 .2 L19.7 3.6 L13.4 9.4 L9.2 14 L4.4 10.4 L9.4 5.6Z" fill="#8fd23e" stroke="#68ad2a" stroke-width=".6"/><path d="M1.3 3.2 C3.4 1.8 8.6 1.8 12.2 3.2 C13.2 4.2 12.4 5.6 10.8 6.4 C8 7.8 4 8 1.3 7.6Z" fill="url(#hg)" stroke="#b98446" stroke-width=".5"/><path d="M4 14.6 C5.6 12.6 10.6 12.2 13.6 12.8 L16.8 14.4 C15.4 16.6 11.6 17.8 7.4 17.4 C5.6 17.2 4.2 16.2 4 14.6Z" fill="url(#hg)" stroke="#b98446" stroke-width=".5"/><path d="M20.4 13 L20.4 20 L15 20Z" fill="#0d0d0d"/></g>
<g transform="translate(81,1.7)"><rect x="0" y="14.7" width="12.2" height="1" fill="#c6c6c6"/><path d="M7.3 .2 L12 3.4 L5.6 13.3 L.6 11.3Z" fill="#efc11f"/><path d="M7.3 .2 L12 3.4 L10.4 5.9 L5.7 2.7Z" fill="#8c1c2c"/><path d="M.6 11.3 L5.6 13.3 L.9 14Z" fill="#e9cf9a"/><path d="M.5 12.5 L2.6 13.7 L.8 14.2Z" fill="#1a1a1a"/><path d="M8.6 3.9 L3 11.6" stroke="#f8de6e" stroke-width="1.2" fill="none"/></g>
<g transform="translate(103.8,2)"><rect x="0" y="14" width="13.6" height=".9" fill="#cfcfcf"/><circle cx="4.7" cy="5" r="4.1" fill="#fbfdfe" stroke="#c6bfc3" stroke-width="1.5"/><path d="M8.1 8.7 L12.3 12.9" stroke="#5b9fc9" stroke-width="2.7" stroke-linecap="round"/></g>
<g transform="translate(132,2.8)" fill="none" stroke-linecap="round"><path d="M2.7 2.8 L11.3 11.5 M11.3 2.8 L2.7 11.5" stroke="#a91717" stroke-width="5"/><path d="M2.7 2.8 L11.3 11.5 M11.3 2.8 L2.7 11.5" stroke="#d62c2c" stroke-width="3.7"/><path d="M2.7 2.5 L7 6.9 L11.3 2.5" stroke="#ea5a58" stroke-width="1.8" opacity=".7"/></g></svg>
<div style="left:23px;top:612px;width:1085px;height:34px;border:1px solid #ddd;border-radius:0 0 3px 3px;background:#efefef;"></div>
<div style="left:858px;top:394px;width:57px;height:35px;border:3px solid #e0101a;border-radius:3px;"></div>
<div style="left:860px;top:487px;width:54px;height:127px;border:3px solid #e0101a;border-radius:2px;"></div>
<div style="left:33px;top:656px;width:114px;height:33px;background:#eeeeee;border-radius:3px;border:1px solid #b9b9b9;"></div>
<div style="left:154px;top:656px;width:111px;height:33px;background:#f0712c;border-radius:3px;"></div>
<div style="left:272px;top:656px;width:93px;height:33px;background:#43524a;border-radius:3px;"></div>
<div style="left:372px;top:656px;width:69px;height:33px;background:#2aa148;border-radius:3px;"></div>
<div style="left:448px;top:656px;width:60px;height:33px;background:#e83e8c;border-radius:3px;"></div>
<div style="left:515px;top:656px;width:73px;height:33px;background:#dc2510;border-radius:3px;"></div>
<div style="left:595px;top:656px;width:53px;height:33px;background:#ffc107;border-radius:3px;"></div>
<div style="left:655px;top:656px;width:110px;height:33px;background:#0a77bd;border-radius:3px;"></div>
<svg style="left:0;top:0" width="0" height="0"><defs>
<linearGradient id="hg" x1="0" y1="0" x2="0" y2="1"><stop offset="0" stop-color="#f2cc96"/><stop offset="1" stop-color="#c98d4e"/></linearGradient>
</defs></svg>
<span class="t" style="left:12.80px;top:17px;font-size:21.69px;color:#333;">Financeiro</span>
<span class="t" style="left:13.50px;top:53px;font-size:12.22px;color:#222;">Cliente ID :</span>
<span class="t" style="left:78.20px;top:53px;font-size:12px;color:#111;font-weight:700;transform:scaleX(0.9429);">2</span>
<span class="t" style="left:12.96px;top:68px;font-size:12.5px;color:#222;transform:scaleX(1.0350);">Nome/Razão Social :</span>
<span class="t" style="left:138.20px;top:68px;font-size:12.02px;color:#111;font-weight:700;">CLIENTE MARIA</span>
<span class="t" style="left:13.50px;top:83px;font-size:12.3px;color:#222;">CPF/CNPJ:</span>
<span class="t" style="left:81.00px;top:83px;font-size:12.5px;color:#111;font-weight:700;transform:scaleX(1.0636);">016.881.124-30</span>
<span class="t" style="left:12.90px;top:98px;font-size:12.5px;color:#222;transform:scaleX(1.0508);">Contratos:</span>
<span class="t" style="left:77.40px;top:98px;font-size:12.0px;color:#4cae4c;font-weight:700;transform:scaleX(0.9784);">Ativos: 0</span>
<span class="t" style="left:130.80px;top:98px;font-size:12px;color:#333;">|</span>
<span class="t" style="left:137.80px;top:98px;font-size:12.17px;color:#cf5b6b;font-weight:700;">Ativos Vel. Red.: 0</span>
<span class="t" style="left:247.20px;top:98px;font-size:12px;color:#8a8a4a;">|</span>
<span class="t" style="left:254.30px;top:98px;font-size:12.0px;color:#b9aa3c;font-weight:700;transform:scaleX(0.9836);">Inativos: 1</span>
<span class="t" style="left:317.60px;top:98px;font-size:12px;color:#333;">|</span>
<span class="t" style="left:324.40px;top:98px;font-size:12.0px;color:#e2683c;font-weight:700;transform:scaleX(0.9930);">Suspensos: 0</span>
<span class="t" style="left:406.00px;top:98px;font-size:12px;color:#8a8a4a;">|</span>
<span class="t" style="left:413.50px;top:98px;font-size:12.0px;color:#4d4d4d;font-weight:700;">Cancelados: 0</span>
<span class="t" style="left:902.56px;top:53px;font-size:12.5px;color:#222;transform:scaleX(1.0408);">Data de Cadastro : 25/09/2021 10:36:12</span>
<span class="t" style="left:903.60px;top:68px;font-size:12.5px;color:#222;transform:scaleX(1.0134);">Tipo de Cliente : Pessoa Física</span>
<span class="t" style="left:903.60px;top:83px;font-size:12.5px;color:#222;transform:scaleX(1.0053);">Serviços:</span>
<span class="t" style="left:986.00px;top:83px;font-size:12.0px;color:#5cb87a;font-weight:700;transform:scaleX(0.9859);">0 Online</span>
<span class="t" style="left:1070.60px;top:83px;font-size:12.0px;color:#d9534f;font-weight:700;transform:scaleX(0.9911);text-decoration:underline;">1 Offline</span>
<span class="t" style="left:29.30px;top:144px;font-size:12.17px;color:#5a5a5a;font-weight:700;transform:scaleX(1.0026);">Cadastro</span>
<span class="t" style="left:102.30px;top:144px;font-size:12.0px;color:#5a5a5a;font-weight:700;transform:scaleX(0.9896);">Contratos</span>
<span class="t" style="left:183.25px;top:144px;font-size:12.23px;color:#fff;font-weight:700;transform:scaleX(1.0029);">Financeiro</span>
<span class="t" style="left:269.30px;top:144px;font-size:12.27px;color:#5a5a5a;font-weight:700;transform:scaleX(1.0021);">Comodato / Venda</span>
<span class="t" style="left:398.30px;top:144px;font-size:12.0px;color:#5a5a5a;font-weight:700;transform:scaleX(0.9863);">Ocorrências</span>
<span class="t" style="left:489.30px;top:144px;font-size:12.04px;color:#5a5a5a;font-weight:700;">Extrato de Tráfego</span>
<span class="t" style="left:616.30px;top:144px;font-size:12.0px;color:#5a5a5a;font-weight:700;transform:scaleX(0.9918);">Documentos</span>
<span class="t" style="left:710.30px;top:144px;font-size:12.0px;color:#5a5a5a;font-weight:700;transform:scaleX(0.9735);">Aditivos</span>
<span class="t" style="left:778.30px;top:144px;font-size:12.17px;color:#5a5a5a;font-weight:700;transform:scaleX(1.0027);">Histórico</span>
<span class="t" style="left:851.30px;top:144px;font-size:12.0px;color:#5a5a5a;font-weight:700;transform:scaleX(0.9956);">Anotações</span>
<span class="t" style="left:33.00px;top:215px;font-size:12.1px;color:#2f3a4a;font-weight:700;transform:scaleX(1.0023);">Títulos</span>
<span class="t" style="left:94.10px;top:215px;font-size:12.0px;color:#5a5a5a;font-weight:700;transform:scaleX(0.9948);">Carnês</span>
<span class="t" style="left:155.10px;top:215px;font-size:12.25px;color:#5a5a5a;font-weight:700;">Acréscimos/Descontos</span>
<span class="t" style="left:311.10px;top:215px;font-size:12.17px;color:#5a5a5a;font-weight:700;transform:scaleX(1.0024);">Notas Fiscais</span>
<span class="t" style="left:411.10px;top:215px;font-size:12.0px;color:#5a5a5a;font-weight:700;transform:scaleX(0.9953);">Cartões</span>
<span class="t" style="left:477.10px;top:215px;font-size:12.19px;color:#5a5a5a;font-weight:700;">Acordos de Pagamento</span>
<span class="t" style="left:633.10px;top:215px;font-size:12.3px;color:#5a5a5a;font-weight:700;transform:scaleX(0.9949);">Promessas de Pagamento</span>
<span class="t" style="left:807.10px;top:215px;font-size:12.0px;color:#5a5a5a;font-weight:700;transform:scaleX(0.9843);">Cobrança</span>
<span class="t" style="left:882.10px;top:215px;font-size:12.28px;color:#5a5a5a;font-weight:700;transform:scaleX(1.0035);">Indicações</span>
<span class="t" style="left:966.10px;top:215px;font-size:12.24px;color:#5a5a5a;font-weight:700;">Cadastro Negativo</span>
<span class="t" style="left:22.90px;top:256px;font-size:12.5px;color:#444;transform:scaleX(1.0325);">Contrato:</span>
<span class="t" style="left:202.00px;top:256px;font-size:12.5px;color:#8a9b66;font-weight:700;transform:scaleX(1.0047);">Em aberto(7): 280,00</span>
<span class="t" style="left:328.40px;top:256px;font-size:12px;color:#555;">|</span>
<span class="t" style="left:335.50px;top:256px;font-size:12.5px;color:#3d7a45;font-weight:700;transform:scaleX(1.0202);">Pagos(3): 115,00</span>
<span class="t" style="left:438.70px;top:256px;font-size:12px;color:#777;">|</span>
<span class="t" style="left:445.70px;top:256px;font-size:12.43px;color:#888;font-weight:700;transform:scaleX(1.0026);">Cancelados(2): 80,00</span>
<span class="t" style="left:573.00px;top:256px;font-size:12px;color:#555;">|</span>
<span class="t" style="left:580.60px;top:256px;font-size:12.44px;color:#dc3a3c;font-weight:700;transform:scaleX(1.0026);">Vencidos(1): 42,01</span>
<span class="t" style="left:782.50px;top:260px;font-size:12.88px;color:#1c1c1c;">Cadastrar Mensalidade Avulsa</span>
<span class="t" style="left:980.70px;top:260px;font-size:12.87px;color:#fff;">Cadastrar Título Avulso</span>
<span class="t" style="left:50.20px;top:302px;font-size:12.33px;color:#2f3a4a;font-weight:700;transform:scaleX(0.9921);">Títulos em aberto</span>
<span class="t" style="left:879.40px;top:340px;font-size:12.86px;color:#3e3e3e;">Buscar:</span>
<span class="t" style="left:81.00px;top:372px;font-size:12.0px;color:#2f3a4a;font-weight:700;transform:scaleX(0.9967);">Contrato</span>
<span class="t" style="left:168.40px;top:372px;font-size:12.23px;color:#2f3a4a;font-weight:700;transform:scaleX(1.0025);">N. Doc.</span>
<span class="t" style="left:245.70px;top:372px;font-size:12.0px;color:#2f3a4a;font-weight:700;transform:scaleX(0.9974);">Emissão</span>
<span class="t" style="left:342.00px;top:372px;font-size:12.23px;color:#2f3a4a;font-weight:700;transform:scaleX(1.0027);">Vencimento</span>
<span class="t" style="left:448.20px;top:372px;font-size:12.0px;color:#2f3a4a;font-weight:700;transform:scaleX(0.9465);">Dias</span>
<span class="t" style="left:508.20px;top:372px;font-size:12.29px;color:#2f3a4a;font-weight:700;transform:scaleX(1.0047);">Valor</span>
<span class="t" style="left:574.00px;top:372px;font-size:12.07px;color:#2f3a4a;font-weight:700;">Valor Cor.</span>
<span class="t" style="left:667.20px;top:372px;font-size:12.21px;color:#2f3a4a;font-weight:700;">Portador</span>
<span class="t" style="left:757.70px;top:372px;font-size:12.47px;color:#2f3a4a;font-weight:700;transform:scaleX(0.9786);">Modo</span>
<span class="t" style="left:869.60px;top:372px;font-size:12.26px;color:#2f3a4a;font-weight:700;transform:scaleX(0.9497);">NF</span>
<span class="t" style="left:80.30px;top:400px;font-size:13px;color:#555;">2</span>
<span class="t" style="left:167.90px;top:400px;font-size:12.7px;color:#555;">103</span>
<span class="t" style="left:244.80px;top:400px;font-size:13.45px;color:#555;transform:scaleX(1.0123);">04/10/2021</span>
<span class="t" style="left:340.20px;top:400px;font-size:13.45px;color:#d9434b;font-weight:700;transform:scaleX(1.0091);">01/09/2021</span>
<span class="t" style="left:447.70px;top:401px;font-size:9.0px;color:#c4302b;transform:scaleX(0.9926);">121</span>
<span class="t" style="left:507.30px;top:400px;font-size:13.2px;color:#111;font-weight:700;transform:scaleX(1.0041);">40.00</span>
<span class="t" style="left:573.10px;top:400px;font-size:12.64px;color:#111;font-weight:700;transform:scaleX(0.9946);">42.01</span>
<span class="t" style="left:658.20px;top:397px;font-size:8.65px;color:#5c5c5c;font-weight:700;">Cobrança Local</span>
<span class="t" style="left:757.00px;top:400px;font-size:12.72px;color:#555;">Avulso (Carnê)</span>
<span class="t" style="left:868.50px;top:400px;font-size:12.55px;color:#3d4450;transform:scaleX(0.9688);">Gerar</span>
<span class="t" style="left:80.30px;top:431px;font-size:13px;color:#555;">2</span>
<span class="t" style="left:167.90px;top:431px;font-size:12.7px;color:#555;">105</span>
<span class="t" style="left:244.80px;top:431px;font-size:13.45px;color:#555;transform:scaleX(1.0123);">04/10/2021</span>
<span class="t" style="left:340.20px;top:431px;font-size:13.45px;color:#3f3fc0;font-weight:700;transform:scaleX(1.0243);">20/02/2022</span>
<span class="t" style="left:507.30px;top:431px;font-size:13.2px;color:#111;font-weight:700;transform:scaleX(1.0041);">40.00</span>
<span class="t" style="left:573.10px;top:431px;font-size:13.04px;color:#111;font-weight:700;">40.00</span>
<span class="t" style="left:658.20px;top:428px;font-size:8.65px;color:#5c5c5c;font-weight:700;">Cobrança Local</span>
<span class="t" style="left:757.00px;top:431px;font-size:12.72px;color:#555;">Avulso (Carnê)</span>
<span class="t" style="left:869.40px;top:431px;font-size:13px;color:#3d4450;">1</span>
<span class="t" style="left:879.20px;top:431px;font-size:13px;color:#3d4450;font-weight:700;transform:scaleX(0.8500);">F</span>
<span class="t" style="left:80.30px;top:462px;font-size:13px;color:#555;">2</span>
<span class="t" style="left:167.90px;top:462px;font-size:12.7px;color:#555;">106</span>
<span class="t" style="left:244.80px;top:462px;font-size:13.45px;color:#555;transform:scaleX(1.0123);">04/10/2021</span>
<span class="t" style="left:340.20px;top:462px;font-size:13.45px;color:#3f3fc0;font-weight:700;transform:scaleX(1.0243);">20/03/2022</span>
<span class="t" style="left:507.30px;top:462px;font-size:13.2px;color:#111;font-weight:700;transform:scaleX(1.0041);">40.00</span>
<span class="t" style="left:573.10px;top:462px;font-size:13.04px;color:#111;font-weight:700;">40.00</span>
<span class="t" style="left:658.20px;top:459px;font-size:8.65px;color:#5c5c5c;font-weight:700;">Cobrança Local</span>
<span class="t" style="left:757.00px;top:462px;font-size:12.72px;color:#555;">Avulso (Carnê)</span>
<span class="t" style="left:868.80px;top:462px;font-size:13px;color:#3d4450;">2</span>
<span class="t" style="left:879.20px;top:462px;font-size:13px;color:#3d4450;font-weight:700;transform:scaleX(0.8500);">F</span>
<span class="t" style="left:80.30px;top:493px;font-size:13px;color:#555;">2</span>
<span class="t" style="left:167.90px;top:493px;font-size:12.7px;color:#555;">107</span>
<span class="t" style="left:244.80px;top:493px;font-size:13.45px;color:#555;transform:scaleX(1.0123);">04/10/2021</span>
<span class="t" style="left:340.20px;top:493px;font-size:13.45px;color:#3f3fc0;font-weight:700;transform:scaleX(1.0243);">20/04/2022</span>
<span class="t" style="left:507.30px;top:493px;font-size:13.2px;color:#111;font-weight:700;transform:scaleX(1.0041);">40.00</span>
<span class="t" style="left:573.10px;top:493px;font-size:13.04px;color:#111;font-weight:700;">40.00</span>
<span class="t" style="left:658.20px;top:490px;font-size:8.65px;color:#5c5c5c;font-weight:700;">Cobrança Local</span>
<span class="t" style="left:757.00px;top:493px;font-size:12.72px;color:#555;">Avulso (Carnê)</span>
<span class="t" style="left:868.50px;top:493px;font-size:12.55px;color:#3d4450;transform:scaleX(0.9688);">Gerar</span>
<span class="t" style="left:80.30px;top:524px;font-size:13px;color:#555;">2</span>
<span class="t" style="left:167.90px;top:524px;font-size:12.7px;color:#555;">108</span>
<span class="t" style="left:244.80px;top:524px;font-size:13.45px;color:#555;transform:scaleX(1.0123);">04/10/2021</span>
<span class="t" style="left:340.20px;top:524px;font-size:13.45px;color:#3f3fc0;font-weight:700;transform:scaleX(1.0243);">20/05/2022</span>
<span class="t" style="left:507.30px;top:524px;font-size:13.2px;color:#111;font-weight:700;transform:scaleX(1.0041);">40.00</span>
<span class="t" style="left:573.10px;top:524px;font-size:13.04px;color:#111;font-weight:700;">40.00</span>
<span class="t" style="left:658.20px;top:521px;font-size:8.65px;color:#5c5c5c;font-weight:700;">Cobrança Local</span>
<span class="t" style="left:757.00px;top:524px;font-size:12.72px;color:#555;">Avulso (Carnê)</span>
<span class="t" style="left:868.50px;top:524px;font-size:12.55px;color:#3d4450;transform:scaleX(0.9688);">Gerar</span>
<span class="t" style="left:80.30px;top:555px;font-size:13px;color:#555;">2</span>
<span class="t" style="left:167.90px;top:555px;font-size:12.7px;color:#555;">109</span>
<span class="t" style="left:244.80px;top:555px;font-size:13.45px;color:#555;transform:scaleX(1.0123);">04/10/2021</span>
<span class="t" style="left:340.20px;top:555px;font-size:13.45px;color:#3f3fc0;font-weight:700;transform:scaleX(1.0243);">20/06/2022</span>
<span class="t" style="left:507.30px;top:555px;font-size:13.2px;color:#111;font-weight:700;transform:scaleX(1.0041);">40.00</span>
<span class="t" style="left:573.10px;top:555px;font-size:13.04px;color:#111;font-weight:700;">40.00</span>
<span class="t" style="left:658.20px;top:552px;font-size:8.65px;color:#5c5c5c;font-weight:700;">Cobrança Local</span>
<span class="t" style="left:757.00px;top:555px;font-size:12.72px;color:#555;">Avulso (Carnê)</span>
<span class="t" style="left:868.50px;top:555px;font-size:12.55px;color:#3d4450;transform:scaleX(0.9688);">Gerar</span>
<span class="t" style="left:80.30px;top:586px;font-size:13px;color:#555;">2</span>
<span class="t" style="left:167.90px;top:586px;font-size:12.7px;color:#555;">110</span>
<span class="t" style="left:244.80px;top:586px;font-size:13.45px;color:#555;transform:scaleX(1.0123);">04/10/2021</span>
<span class="t" style="left:340.20px;top:586px;font-size:13.45px;color:#3f3fc0;font-weight:700;transform:scaleX(1.0243);">20/07/2022</span>
<span class="t" style="left:507.30px;top:586px;font-size:13.2px;color:#111;font-weight:700;transform:scaleX(1.0041);">40.00</span>
<span class="t" style="left:573.10px;top:586px;font-size:13.04px;color:#111;font-weight:700;">40.00</span>
<span class="t" style="left:658.20px;top:583px;font-size:8.65px;color:#5c5c5c;font-weight:700;">Cobrança Local</span>
<span class="t" style="left:757.00px;top:586px;font-size:12.72px;color:#555;">Avulso (Carnê)</span>
<span class="t" style="left:868.50px;top:586px;font-size:12.55px;color:#3d4450;transform:scaleX(0.9688);">Gerar</span>
<span class="t" style="left:27.69px;top:622px;font-size:12.92px;color:#444;transform:scaleX(1.0059);">Mostrando de 1 até 7 de 7 registros</span>
<span class="t" style="left:883.80px;top:617px;font-size:12.46px;color:#bdbdbd;font-weight:700;transform:scaleX(0.9859);">Primeiro</span>
<span class="t" style="left:937.50px;top:617px;font-size:12.0px;color:#bdbdbd;font-weight:700;transform:scaleX(0.9851);">Anterior</span>
<span class="t" style="left:991.80px;top:617px;font-size:12px;color:#bdbdbd;font-weight:700;">1</span>
<span class="t" style="left:1004.90px;top:617px;font-size:12.02px;color:#bdbdbd;font-weight:700;">Seguinte</span>
<span class="t" style="left:1059.30px;top:617px;font-size:12.23px;color:#bdbdbd;font-weight:700;transform:scaleX(1.0041);">Último</span>
<span class="t" style="left:42.40px;top:662px;font-size:14.25px;color:#222;">Imprimir Boleto</span>
<span class="t" style="left:162.60px;top:662px;font-size:14.0px;color:#fff;">Imprimir Carnê</span>
<span class="t" style="left:280.51px;top:662px;font-size:14.35px;color:#fff;transform:scaleX(0.9891);">Imprimir Pix</span>
<span class="t" style="left:381.04px;top:662px;font-size:14.0px;color:#fff;transform:scaleX(0.9568);">Receber</span>
<span class="t" style="left:458.00px;top:662px;font-size:14.0px;color:#fff;transform:scaleX(0.9742);">Alterar</span>
<span class="t" style="left:524.00px;top:662px;font-size:14.0px;color:#fff;transform:scaleX(0.9758);">Cancelar</span>
<span class="t" style="left:604.03px;top:662px;font-size:14.0px;color:#222;transform:scaleX(0.9736);">Email</span>
<span class="t" style="left:664.60px;top:662px;font-size:14.0px;color:#fff;transform:scaleX(0.9729);">Outras Opções</span>
</body></html>
